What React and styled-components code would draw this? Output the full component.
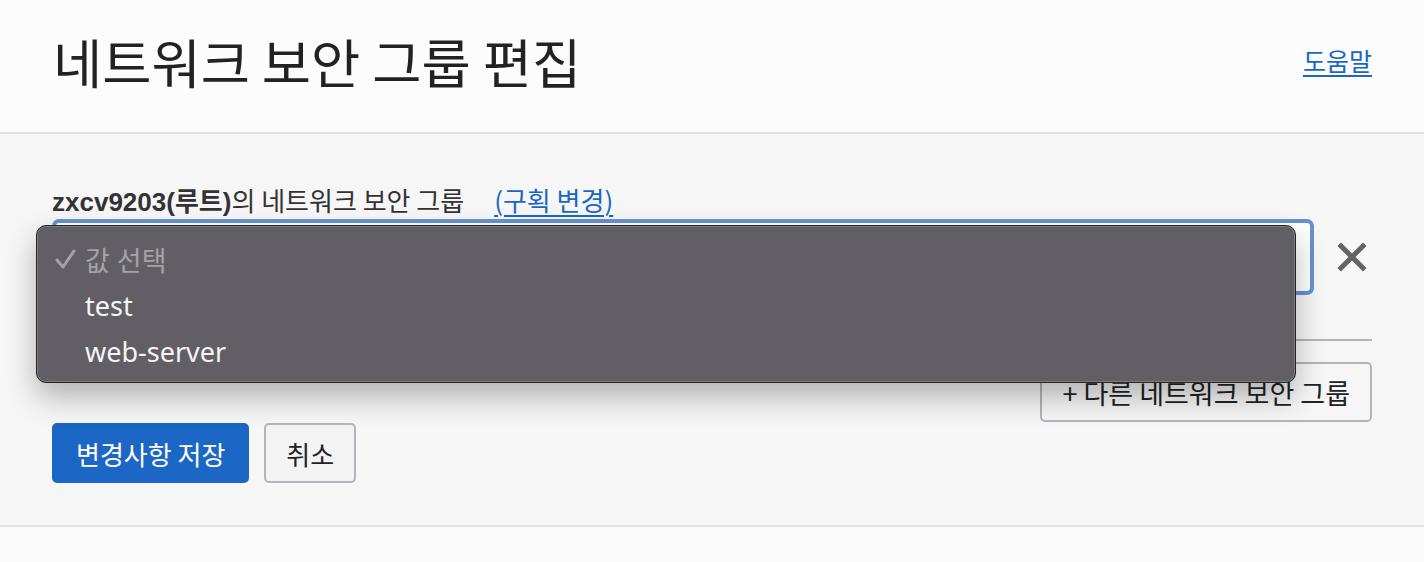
import React from 'react';
import styled, { createGlobalStyle } from 'styled-components';

const GlobalStyle = createGlobalStyle`
  html, body {
    margin: 0;
    padding: 0;
    background: #fbfbfb;
    font-family: "Liberation Sans", "Noto Sans CJK KR", sans-serif;
    color: #333333;
  }
  * {
    box-sizing: border-box;
  }
`;

const Page = styled.div`
  width: 1424px;
  min-height: 562px;
  background: #fbfbfb;
`;

const Header = styled.header`
  height: 134px;
  display: flex;
  align-items: center;
  justify-content: space-between;
  padding: 0 52px 12px 53px;
  background: #fcfcfc;
  border-bottom: 2px solid #e3e3e3;
`;

const Title = styled.h1`
  margin: 0;
  font-family: "Noto Sans CJK KR", sans-serif;
  font-weight: 400;
  font-size: 53.5px;
  color: #222222;
`;

const Link = styled.a`
  color: #1a66c6;
  font-family: "Noto Sans CJK KR", sans-serif;
  font-size: ${(p) => (p.small ? '26px' : '25px')};
  text-decoration: underline;
  text-underline-offset: 4px;
  text-decoration-thickness: 2px;
  cursor: pointer;
`;

const Body = styled.section`
  background: #f6f6f6;
  padding: 47px 52px 42px;
  border-bottom: 2px solid #e3e3e3;
`;

const Label = styled.div`
  font-size: 26px;
  color: #333333;
  display: flex;
  align-items: baseline;
  height: 32px;

  b {
    font-weight: 700;
  }
`;

const LabelText = styled.span`
  font-family: "Noto Sans CJK KR", sans-serif;
  margin-right: 30px;
`;

const SelectRow = styled.div`
  position: relative;
  display: flex;
  align-items: center;
  gap: 20px;
  margin-top: 6px;
`;

const SelectBox = styled.div`
  width: 1262px;
  height: 76px;
  border: 4px solid #6592cf;
  border-radius: 7px;
  background: #ffffff;
`;

const CloseButton = styled.button`
  width: 36px;
  height: 36px;
  padding: 0;
  border: none;
  background: transparent;
  display: flex;
  align-items: center;
  justify-content: center;
  cursor: pointer;
`;

const Menu = styled.ul`
  position: absolute;
  left: -16px;
  top: 6px;
  width: 1260px;
  height: 158px;
  margin: 0;
  padding: 10px 0 0;
  list-style: none;
  background: #615f65;
  border: 1px solid #262626;
  border-radius: 10px;
  box-shadow: inset 0 0 0 1px rgba(255, 255, 255, 0.18), 0 14px 30px rgba(0, 0, 0, 0.28);
`;

const MenuItem = styled.li`
  display: flex;
  align-items: center;
  height: 46px;
  padding-left: 18px;
  font-family: "Noto Sans", "Noto Sans CJK KR", sans-serif;
  font-size: 27px;
  color: ${(p) => (p.disabled ? '#a3a2a7' : '#f4f4f6')};
`;

const Check = styled.span`
  display: flex;
  align-items: center;
  width: 30px;
  height: 100%;
`;

const Divider = styled.hr`
  margin: 44px 0 0;
  border: none;
  border-top: 2px solid #b1b4bb;
`;

const AddRow = styled.div`
  display: flex;
  justify-content: flex-end;
  margin-top: 21px;
`;

const Button = styled.button`
  height: 60px;
  padding: 0 ${(p) => (p.narrow ? '20px' : '22px')};
  border-radius: 5px;
  font-family: "Noto Sans CJK KR", sans-serif;
  font-size: 26px;
  cursor: pointer;
  border: 2px solid ${(p) => (p.primary ? '#1c67c5' : '#b1b4bb')};
  background: ${(p) => (p.primary ? '#1c67c5' : '#f3f3f4')};
  color: ${(p) => (p.primary ? '#ffffff' : '#222222')};
`;

const OutlineButton = styled(Button)`
  background: transparent;
  padding: 0 20px;
  font-size: 27px;
`;

const Actions = styled.div`
  display: flex;
  gap: 15px;
  margin-top: 1px;
`;

const Footer = styled.div`
  height: 36px;
  background: #fbfbfb;
`;

const CloseIcon = () => (
  <svg width="30" height="30" viewBox="0 0 30 30">
    <path d="M4 4 L26 26 M26 4 L4 26" stroke="#636363" strokeWidth="5" strokeLinecap="square" />
  </svg>
);

const CheckIcon = () => (
  <svg width="22" height="22" viewBox="0 0 22 22">
    <path d="M2 12 L8 19 L19 3" fill="none" stroke="#a3a2a7" strokeWidth="3" strokeLinecap="round" strokeLinejoin="round" />
  </svg>
);

const options = [
  { label: '값 선택', disabled: true, checked: true },
  { label: 'test' },
  { label: 'web-server' },
];

const App = () => (
  <Page>
    <GlobalStyle />
    <Header>
      <Title>네트워크 보안 그룹 편집</Title>
      <Link>도움말</Link>
    </Header>
    <Body>
      <Label>
        <b>zxcv9203(루트)</b>
        <LabelText>의 네트워크 보안 그룹</LabelText>
        <Link small>(구획 변경)</Link>
      </Label>
      <SelectRow>
        <SelectBox />
        <CloseButton type="button">
          <CloseIcon />
        </CloseButton>
        <Menu>
          {options.map((opt) => (
            <MenuItem key={opt.label} disabled={opt.disabled}>
              <Check>{opt.checked ? <CheckIcon /> : null}</Check>
              {opt.label}
            </MenuItem>
          ))}
        </Menu>
      </SelectRow>
      <Divider />
      <AddRow>
        <OutlineButton type="button">+ 다른 네트워크 보안 그룹</OutlineButton>
      </AddRow>
      <Actions>
        <Button primary type="button">변경사항 저장</Button>
        <Button narrow type="button">취소</Button>
      </Actions>
    </Body>
    <Footer />
  </Page>
);

export default App;
